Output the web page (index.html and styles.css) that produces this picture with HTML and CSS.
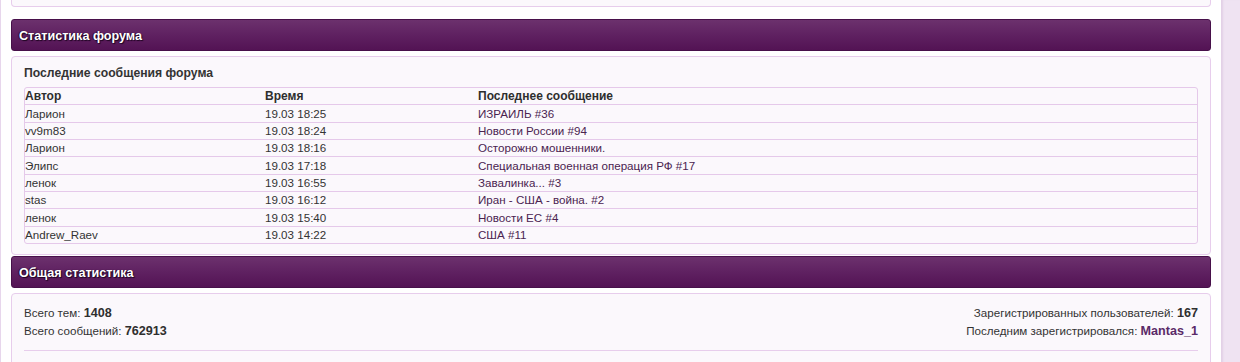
FILE: index.html
```html
<!DOCTYPE html>
<html lang="ru">
<head>
<meta charset="utf-8">
<title>Статистика форума</title>
<link rel="stylesheet" href="styles.css">
</head>
<body>
<div class="page">
  <main class="main">
    <div class="box box-stub"></div>

    <div class="cat-head">Статистика форума</div>
    <div class="box box-recent">
      <div class="box-title">Последние сообщения форума</div>
      <table class="recent">
        <colgroup><col class="c-author"><col class="c-time"><col></colgroup>
        <thead>
          <tr><th>Автор</th><th>Время</th><th>Последнее сообщение</th></tr>
        </thead>
        <tbody>
          <tr><td>Ларион</td><td>19.03 18:25</td><td><a href="#">ИЗРАИЛЬ #36</a></td></tr>
          <tr><td>vv9m83</td><td>19.03 18:24</td><td><a href="#">Новости России #94</a></td></tr>
          <tr><td>Ларион</td><td>19.03 18:16</td><td><a href="#">Осторожно мошенники.</a></td></tr>
          <tr><td>Элипс</td><td>19.03 17:18</td><td><a href="#">Специальная военная операция РФ #17</a></td></tr>
          <tr><td>ленок</td><td>19.03 16:55</td><td><a href="#">Завалинка... #3</a></td></tr>
          <tr><td>stas</td><td>19.03 16:12</td><td><a href="#">Иран - США - война. #2</a></td></tr>
          <tr><td>ленок</td><td>19.03 15:40</td><td><a href="#">Новости ЕС #4</a></td></tr>
          <tr><td>Andrew_Raev</td><td>19.03 14:22</td><td><a href="#">США #11</a></td></tr>
        </tbody>
      </table>
    </div>

    <div class="cat-head cat-head-2">Общая статистика</div>
    <div class="box box-stats">
      <div class="stats-row">
        <div class="stats-col">
          <div>Всего тем: <b>1408</b></div>
          <div>Всего сообщений: <b>762913</b></div>
        </div>
        <div class="stats-col stats-right">
          <div>Зарегистрированных пользователей: <b>167</b></div>
          <div>Последним зарегистрировался: <a class="user" href="#">Mantas_1</a></div>
        </div>
      </div>
      <div class="divider"></div>
    </div>
  </main>
  <aside class="side"></aside>
</div>
</body>
</html>
```

FILE: styles.css
```css
html, body {
  margin: 0;
  padding: 0;
  background: #ffffff;
  height: 100%;
}

body {
  font-family: "Liberation Sans", Arial, sans-serif;
  font-size: 11.6px;
  color: #333333;
  overflow: hidden;
}

.page {
  display: flex;
  min-height: 362px;
}

.main {
  width: 1200px;
  flex: none;
  border-left: 1px solid #e7d6ec;
  padding: 0 10px;
}

.side {
  flex: 1;
  background: #efe3f2;
  box-shadow: inset 3px 0 2px -1px #e2d0e6;
}

.box {
  background: #fbf8fc;
  border: 1px solid #e7cdec;
  border-radius: 4px;
}

.box-stub {
  height: 6px;
  border-top: none;
  border-radius: 0 0 4px 4px;
}

.cat-head {
  margin-top: 12px;
  height: 30px;
  line-height: 32px;
  padding: 0 7px;
  border: 1px solid #47104a;
  border-radius: 3px;
  background: linear-gradient(to bottom, #6c316d 0%, #5f2161 50%, #531354 100%);
  color: #ffffff;
  font-weight: bold;
  font-size: 12.6px;
  text-shadow: 1px 1px 1px #1d0420, -1px 0 1px #2a0a2c;
}

.cat-head-2 {
  margin-top: 1px;
}

.box-recent {
  margin-top: 5px;
  padding: 9px 12px 10px;
}

.box-title {
  font-weight: bold;
  font-size: 12.2px;
  line-height: 15px;
  margin-bottom: 6px;
}

.recent {
  width: 100%;
  border-collapse: separate;
  border-spacing: 0;
  border: 1px solid #e5c9ea;
  border-radius: 3px;
  table-layout: fixed;
}

.c-author { width: 240px; }
.c-time { width: 213px; }

.recent th,
.recent td {
  height: 16.35px;
  padding: 0;
  text-align: left;
  line-height: 16px;
  border-bottom: 1px solid #e5c9ea;
  white-space: nowrap;
}

.recent th {
  font-weight: bold;
  font-size: 12px;
  color: #2e2e2e;
}

.recent tbody tr:last-child td {
  border-bottom: none;
}

.recent a {
  color: #4a2350;
  text-decoration: none;
}

.box-stats {
  margin-top: 5px;
  padding: 10px 12px 0;
  height: 80px;
}

.stats-row {
  display: flex;
  justify-content: space-between;
  line-height: 17px;
}

.stats-right {
  text-align: right;
}

.stats-col b {
  color: #2f2f2f;
  font-size: 12.6px;
}

.user {
  color: #5a2a68;
  font-weight: bold;
  font-size: 12.6px;
  text-decoration: none;
}

.divider {
  margin-top: 10px;
  border-top: 1px solid #e7cdec;
}
```
